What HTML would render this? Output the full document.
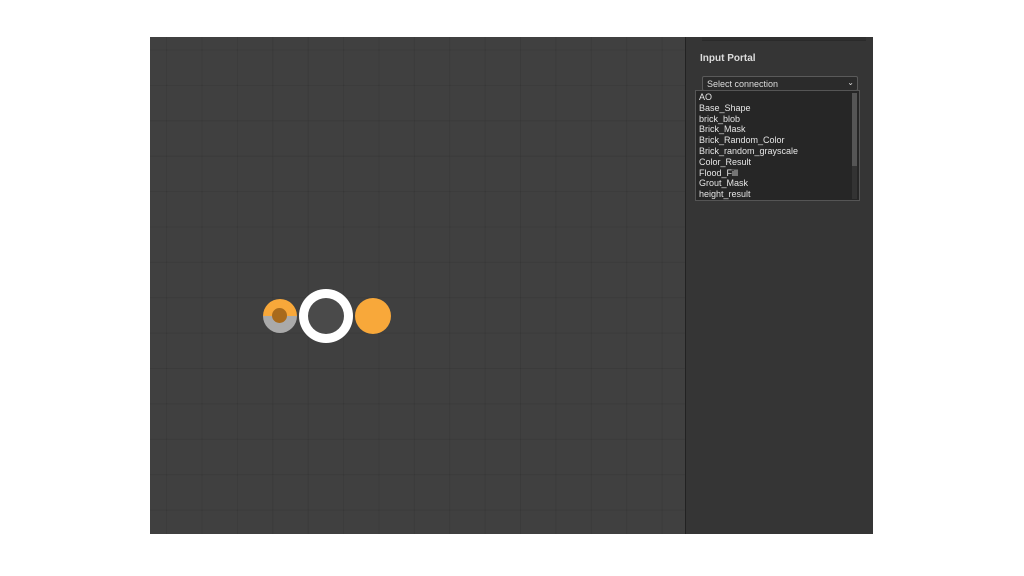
<!DOCTYPE html>
<html><head><style>
body{margin:0;width:1024px;height:576px;background:#fff;position:relative;overflow:hidden;font-family:"Liberation Sans",sans-serif}
#canvas{position:absolute;left:150px;top:37px;width:535px;height:497px;background-color:#404040;
background-image:linear-gradient(90deg,rgba(0,0,0,0.08) 1px,transparent 1px),linear-gradient(0deg,rgba(0,0,0,0.08) 1px,transparent 1px);
background-size:35.4px 35.4px;background-position:51.5px 13.5px}
#panel{position:absolute;left:685px;top:37px;width:188px;height:497px;background:#353535;border-left:1px solid #222;box-sizing:border-box}
.topbox{position:absolute;left:16px;top:0;width:164px;height:3px;border-bottom:1px solid #2a2a2a;background:#303030}
.title{position:absolute;left:14px;top:16px;color:#ddd;font-size:10px;font-weight:bold}
.sel{position:absolute;left:16px;top:39px;width:156px;height:15px;background:#2b2b2b;border:1px solid #5a5a5a;box-sizing:border-box;color:#ddd;font-size:9px;line-height:14px;padding-left:4px;border-radius:2px}
.sel span{position:absolute;right:3px;top:-1px;font-size:8px}
.list{position:absolute;left:9px;top:53px;width:165px;height:111px;background:#262626;border:1px solid #555;box-sizing:border-box;color:#e6e6e6;font-size:9px;line-height:10.8px;padding-left:3px;padding-top:1px}
.sb{position:absolute;right:2px;top:2px;width:5px;height:106px;background:#333}
.sb div{width:5px;height:73px;background:#555}
.c{position:absolute;border-radius:50%}
</style></head><body>
<div id="canvas">
<div class="c" style="left:113px;top:262px;width:34px;height:34px;background:linear-gradient(#f8a83a 50%,#aaa 50%)"></div>
<div class="c" style="left:122px;top:271px;width:15px;height:15px;background:#a86a1c"></div>
<div class="c" style="left:149px;top:252px;width:54px;height:54px;background:#fff"></div>
<div class="c" style="left:158px;top:261px;width:36px;height:36px;background:#4a4a4a"></div>
<div class="c" style="left:205px;top:261px;width:36px;height:36px;background:#f8a83a"></div>
</div>
<div id="panel">
<div class="topbox"></div>
<div class="title">Input Portal</div>
<div class="sel">Select connection<span>&#8964;</span></div>
<div class="list">AO<br>Base_Shape<br>brick_blob<br>Brick_Mask<br>Brick_Random_Color<br>Brick_random_grayscale<br>Color_Result<br>Flood_Fill<br>Grout_Mask<br>height_result<div class="sb"><div></div></div></div>
</div>
</body></html>
